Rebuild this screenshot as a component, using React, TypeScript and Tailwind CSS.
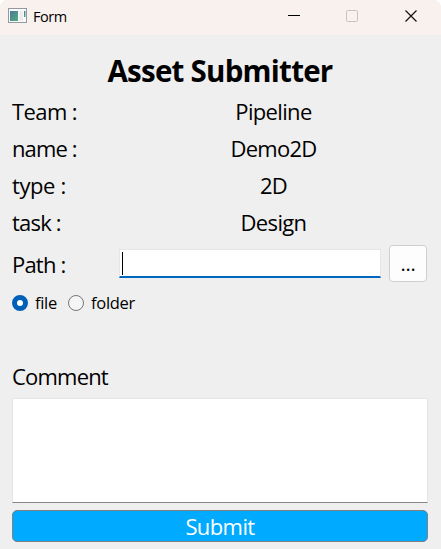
type Field = { label: string; value: string; labelStyle: string; valueStyle: string };

const fields: Field[] = [
  { label: "Team :", value: "Pipeline", labelStyle: "tracking-[-0.6px]", valueStyle: "tracking-[-0.65px]" },
  { label: "name :", value: "Demo2D", labelStyle: "tracking-[-0.9px]", valueStyle: "tracking-[-0.75px]" },
  { label: "type :", value: "2D", labelStyle: "tracking-[-0.4px]", valueStyle: "tracking-[-0.8px]" },
  { label: "task :", value: "Design", labelStyle: "tracking-[-0.8px]", valueStyle: "tracking-[-0.65px]" },
];

function TitleBar() {
  return (
    <header className="flex h-[35px] items-start bg-[#f9f1ed]">
      <svg className="ml-2 mt-2 shrink-0" width="19" height="16" viewBox="0 0 19 16">
        <defs>
          <linearGradient id="pane" x1="0" y1="0" x2="1" y2="1">
            <stop offset="0" stopColor="#4b769c" />
            <stop offset="1" stopColor="#58ad78" />
          </linearGradient>
        </defs>
        <rect x="0.5" y="0.5" width="18" height="14" fill="#fafafa" stroke="#9299a3" />
        <rect x="2" y="3" width="8" height="10" fill="url(#pane)" />
        <rect x="11.5" y="3" width="3.5" height="10" fill="#ebecee" />
        <rect x="16" y="3" width="1.5" height="6" fill="url(#pane)" />
      </svg>
      <span className="ml-1.5 mt-[7px] text-[14.5px] leading-5 tracking-[-0.5px]">Form</span>
      <svg className="ml-auto mr-6 mt-[9px] shrink-0" width="129" height="14" viewBox="0 0 129 14" fill="none">
        <path d="M0 6.5h12" stroke="#000" />
        <rect x="58.5" y="1.5" width="11" height="11" rx="1" stroke="#c8c1be" />
        <path d="M117.5 1.5l11 11m0-11l-11 11" stroke="#111" strokeWidth="1.2" />
      </svg>
    </header>
  );
}

export default function App() {
  return (
    <div className="h-[549px] w-[441px] overflow-hidden rounded-t-lg bg-[#efefef] font-['Open_Sans','Noto_Sans',sans-serif] text-black">
      <TitleBar />
      <main className="flex flex-col pl-3 pr-[13px]">
        <h1 className="mt-[15px] h-[43px] text-center text-[29.5px] font-bold leading-[41px] tracking-[-0.75px]">
          Asset Submitter
        </h1>
        {fields.map((f) => (
          <div key={f.label} className="flex h-[37px] items-center text-[22px] leading-[37px]">
            <span className={`w-[107px] shrink-0 ${f.labelStyle}`}>{f.label}</span>
            <span className={`flex-1 text-center ${f.valueStyle}`}>{f.value}</span>
          </div>
        ))}
        <div className="mt-1 flex h-[37px] items-center">
          <span className="w-[107px] shrink-0 pt-0.5 text-[22px] leading-[37px] tracking-[-0.8px]">Path :</span>
          <div className="flex h-[29px] w-[262px] items-start border border-b-2 border-[#e5e5e5] border-b-[#0067c0] bg-white pl-0.5 pt-0.5">
            <span className="h-[23px] w-px bg-black" />
          </div>
          <button className="ml-2 h-[37px] w-[38px] rounded-[4px] border border-[#cfcfcf] bg-[#fdfdfd] text-[20px] leading-[35px] tracking-[-0.3px]">
            ...
          </button>
        </div>
        <div className="mt-[9px] flex h-6 items-center text-[16.5px] leading-6 tracking-[-0.3px]">
          <span className="h-4 w-4 rounded-full border-[5px] border-[#005fb8] bg-white" />
          <span className="ml-[7px] w-[33px]">file</span>
          <span className="h-4 w-4 rounded-full border border-[#777] bg-[#f5f5f5]" />
          <span className="ml-[7px]">folder</span>
        </div>
        <label className="mt-[43px] h-10 text-[22px] leading-[37px] tracking-[-0.8px]">Comment</label>
        <div className="h-[105px] border border-[#e5e5e5] border-b-[#868686] bg-white" />
        <button className="mt-[7px] h-8 rounded-[5px] border border-[#808080] bg-[#00aaff] text-[22px] leading-[31px] tracking-[-0.6px] text-white">
          Submit
        </button>
      </main>
    </div>
  );
}
